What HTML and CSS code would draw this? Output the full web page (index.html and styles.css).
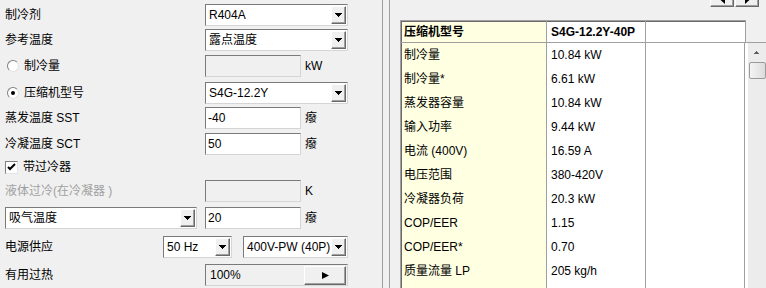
FILE: index.html
```html
<!DOCTYPE html>
<html>
<head>
    <meta charset="UTF-8">
    <title>压缩机选型</title>
    <link rel="stylesheet" href="styles.css">
</head>
<body>
<div class="app">
    <div class="left">
        <div class="row">
            <span class="label">制冷剂</span>
            <div class="select w-full"><span class="val">R404A</span><span class="drop"><svg width="7" height="4"><path d="M0 0h7v1h-1v1h-1v1h-1v1h-1v-1h-1v-1h-1v-1h-1z"/></svg></span></div>
        </div>
        <div class="row">
            <span class="label">参考温度</span>
            <div class="select w-full"><span class="val">露点温度</span><span class="drop"><svg width="7" height="4"><path d="M0 0h7v1h-1v1h-1v1h-1v1h-1v-1h-1v-1h-1v-1h-1z"/></svg></span></div>
        </div>
        <div class="row">
            <span class="label opt"><span class="radio"></span>制冷量</span>
            <div class="input disabled"></div>
            <span class="unit">kW</span>
        </div>
        <div class="row">
            <span class="label opt"><span class="radio on"></span>压缩机型号</span>
            <div class="select w-full"><span class="val">S4G-12.2Y</span><span class="drop"><svg width="7" height="4"><path d="M0 0h7v1h-1v1h-1v1h-1v1h-1v-1h-1v-1h-1v-1h-1z"/></svg></span></div>
        </div>
        <div class="row">
            <span class="label">蒸发温度 SST</span>
            <div class="input">-40</div>
            <span class="unit">癈</span>
        </div>
        <div class="row">
            <span class="label">冷凝温度 SCT</span>
            <div class="input">50</div>
            <span class="unit">癈</span>
        </div>
        <div class="row check-row">
            <span class="label"><span class="checkbox"><svg width="11" height="11"><path d="M2 5l2 2 5-5" fill="none" stroke="#000" stroke-width="2"/></svg></span>带过冷器</span>
        </div>
        <div class="row">
            <span class="label muted">液体过冷(在冷凝器 )</span>
            <div class="input disabled"></div>
            <span class="unit">K</span>
        </div>
        <div class="row">
            <div class="select w-suction"><span class="val">吸气温度</span><span class="drop"><svg width="7" height="4"><path d="M0 0h7v1h-1v1h-1v1h-1v1h-1v-1h-1v-1h-1v-1h-1z"/></svg></span></div>
            <div class="input">20</div>
            <span class="unit">癈</span>
        </div>
        <div class="row">
            <span class="label short">电源供应</span>
            <div class="select w-hz"><span class="val">50 Hz</span><span class="drop"><svg width="7" height="4"><path d="M0 0h7v1h-1v1h-1v1h-1v1h-1v-1h-1v-1h-1v-1h-1z"/></svg></span></div>
            <div class="select w-volt"><span class="val">400V-PW (40P)</span><span class="drop"><svg width="7" height="4"><path d="M0 0h7v1h-1v1h-1v1h-1v1h-1v-1h-1v-1h-1v-1h-1z"/></svg></span></div>
        </div>
        <div class="row">
            <span class="label">有用过热</span>
            <div class="slider">
                <span class="val">100%</span>
                <span class="play"><svg width="7" height="7"><path d="M0 0l7 3.5L0 7z"/></svg></span>
            </div>
        </div>
    </div>

    <div class="right">
        <div class="topbar">
            <span class="nav-btn"><svg width="5" height="9"><path d="M5 0v9L0 4.5z"/></svg></span>
            <span class="nav-btn"><svg width="5" height="9"><path d="M0 0v9l5-4.5z"/></svg></span>
        </div>
        <div class="table">
            <div class="thead">
                <div class="th key">压缩机型号</div>
                <div class="th">S4G-12.2Y-40P</div>
                <div class="th last"></div>
            </div>
            <div class="tbody">
                <div class="col key">
                    <div class="cell">制冷量</div>
                    <div class="cell">制冷量*</div>
                    <div class="cell">蒸发器容量</div>
                    <div class="cell">输入功率</div>
                    <div class="cell">电流 (400V)</div>
                    <div class="cell">电压范围</div>
                    <div class="cell">冷凝器负荷</div>
                    <div class="cell">COP/EER</div>
                    <div class="cell">COP/EER*</div>
                    <div class="cell">质量流量 LP</div>
                </div>
                <div class="col">
                    <div class="cell">10.84 kW</div>
                    <div class="cell">6.61 kW</div>
                    <div class="cell">10.84 kW</div>
                    <div class="cell">9.44 kW</div>
                    <div class="cell">16.59 A</div>
                    <div class="cell">380-420V</div>
                    <div class="cell">20.3 kW</div>
                    <div class="cell">1.15</div>
                    <div class="cell">0.70</div>
                    <div class="cell">205 kg/h</div>
                </div>
                <div class="col empty"></div>
                <div class="scrollbar">
                    <span class="sb-up"><svg width="5" height="3"><path d="M2 0h1v1h1v1h1v1h-5v-1h1v-1h1z"/></svg></span>
                    <span class="sb-thumb"></span>
                </div>
            </div>
        </div>
    </div>
</div>
</body>
</html>
```

FILE: styles.css
```css
body {
    margin: 0;
    width: 766px;
    height: 288px;
    overflow: hidden;
    background-color: #f0f0f0;
    font-family: "Liberation Sans", "Noto Sans CJK SC", sans-serif;
    font-size: 12px;
    line-height: 14px;
    color: #000;
}

.app {
    display: flex;
    height: 288px;
}

/* left form panel */
.left {
    width: 383px;
    box-sizing: border-box;
    border-right: 1px solid #a0a0a0;
    padding-top: 4px;
    display: grid;
    grid-template-rows: 25px 26px 27px 25px 26px 24px 23px 27px 29px 28px 22px;
    align-items: start;
}

.row {
    display: flex;
    align-items: center;
    height: 22px;
}

.check-row {
    height: 20px;
}

.label {
    flex: 0 0 205px;
    box-sizing: border-box;
    padding-left: 5px;
    display: flex;
    align-items: center;
    white-space: nowrap;
}

.label.opt {
    padding-left: 7px;
}

.label.short {
    flex-basis: 163px;
}

.label.muted {
    color: #a0a0a0;
}

.radio {
    width: 12px;
    height: 12px;
    box-sizing: border-box;
    border-radius: 50%;
    border: 1px solid;
    border-color: #808080 #e3e3e3 #e3e3e3 #808080;
    background: #fff;
    margin-right: 5px;
    display: flex;
    align-items: center;
    justify-content: center;
}

.radio.on::after {
    content: "";
    width: 4px;
    height: 4px;
    border-radius: 50%;
    background: #000;
}

.checkbox {
    width: 13px;
    height: 13px;
    box-sizing: border-box;
    border: 1px solid;
    border-color: #808080 #e3e3e3 #e3e3e3 #808080;
    background: #fff;
    margin-right: 5px;
    display: flex;
    align-items: center;
    justify-content: center;
}

.select,
.input,
.slider {
    height: 22px;
    box-sizing: border-box;
    border: 1px solid;
    border-color: #7a7a7a #d5d5d5 #d5d5d5 #7a7a7a;
    background: #fff;
    display: flex;
    align-items: center;
}

.select {
    padding: 1px;
}

.select .val {
    flex: 1;
    padding-left: 2px;
    white-space: nowrap;
    overflow: hidden;
}

.drop {
    width: 15px;
    height: 18px;
    box-sizing: border-box;
    background: #f0f0f0;
    border: 1px solid;
    border-color: #fff #696969 #696969 #fff;
    box-shadow: inset -1px -1px #a0a0a0;
    display: flex;
    align-items: center;
    justify-content: center;
}

.w-full {
    width: 143px;
}

.w-suction {
    width: 192px;
    margin-left: 5px;
    margin-right: 8px;
}

.w-hz {
    width: 69px;
}

.w-volt {
    width: 105px;
    margin-left: 11px;
}

.input {
    width: 96px;
    padding-left: 2px;
}

.input.disabled {
    background: #f0f0f0;
}

.unit {
    margin-left: 4px;
}

.slider {
    width: 143px;
    background: #f0f0f0;
    padding: 0 1px 0 4px;
}

.slider .val {
    flex: 1;
}

.play {
    width: 42px;
    height: 19px;
    box-sizing: border-box;
    border: 1px solid;
    border-color: #fff #696969 #696969 #fff;
    box-shadow: inset -1px -1px #a0a0a0;
    display: flex;
    align-items: center;
    justify-content: center;
}

/* right result panel */
.right {
    flex: 1;
    margin-left: 6px;
    border-left: 1px solid #a0a0a0;
    display: flex;
    flex-direction: column;
    min-width: 0;
}

.topbar {
    height: 20px;
    display: flex;
    justify-content: flex-end;
    align-items: flex-start;
    gap: 1px;
    padding-right: 7px;
    overflow: hidden;
}

.nav-btn {
    width: 24px;
    height: 16px;
    margin-top: -9px;
    box-sizing: border-box;
    border: 1px solid;
    border-color: #fff #696969 #696969 #fff;
    box-shadow: inset -1px -1px #a0a0a0;
    display: flex;
    align-items: center;
    justify-content: center;
}

.table {
    flex: 1;
    margin-left: 10px;
    border-left: 1px solid #a0a0a0;
    display: flex;
    flex-direction: column;
}

.thead {
    display: flex;
    width: 345px;
    height: 22px;
    box-sizing: border-box;
    border-top: 1px solid #a0a0a0;
    box-shadow: inset 1px 1px #696969;
    background: #fff;
}

.th {
    width: 99px;
    box-sizing: border-box;
    border-right: 1px solid #a0a0a0;
    padding: 4px 0 0 4px;
    font-weight: bold;
    white-space: nowrap;
}

.th.key {
    width: 146px;
    padding-left: 3px;
    background: #ffffe1;
    box-shadow: inset 1px 1px #696969;
}

.th.last {
    width: 100px;
}

.tbody {
    flex: 1;
    display: flex;
    border-top: 1px solid #a0a0a0;
    background: #fff;
}

.col {
    width: 99px;
    box-sizing: border-box;
    border-right: 1px solid #a0a0a0;
}

.col.key {
    width: 146px;
    background: #ffffe1;
    box-shadow: inset 1px 0 #696969;
}

.col.empty {
    margin-right: 3px;
}

.cell {
    height: 24px;
    line-height: 24px;
    padding-left: 4px;
    white-space: nowrap;
}

.col.key .cell {
    padding-left: 3px;
}

.scrollbar {
    flex: 1;
    background: #ececec;
    display: flex;
    flex-direction: column;
    align-items: flex-start;
}

.sb-up {
    width: 17px;
    height: 19px;
    display: flex;
    align-items: center;
    justify-content: center;
}

.sb-up svg {
    fill: #606060;
}

.sb-thumb {
    width: 15px;
    height: 15px;
    margin-left: 1px;
    border: 1px solid #9a9a9a;
    border-radius: 2px;
    background: linear-gradient(to right, #f4f4f4, #dcdcdc);
}
```
